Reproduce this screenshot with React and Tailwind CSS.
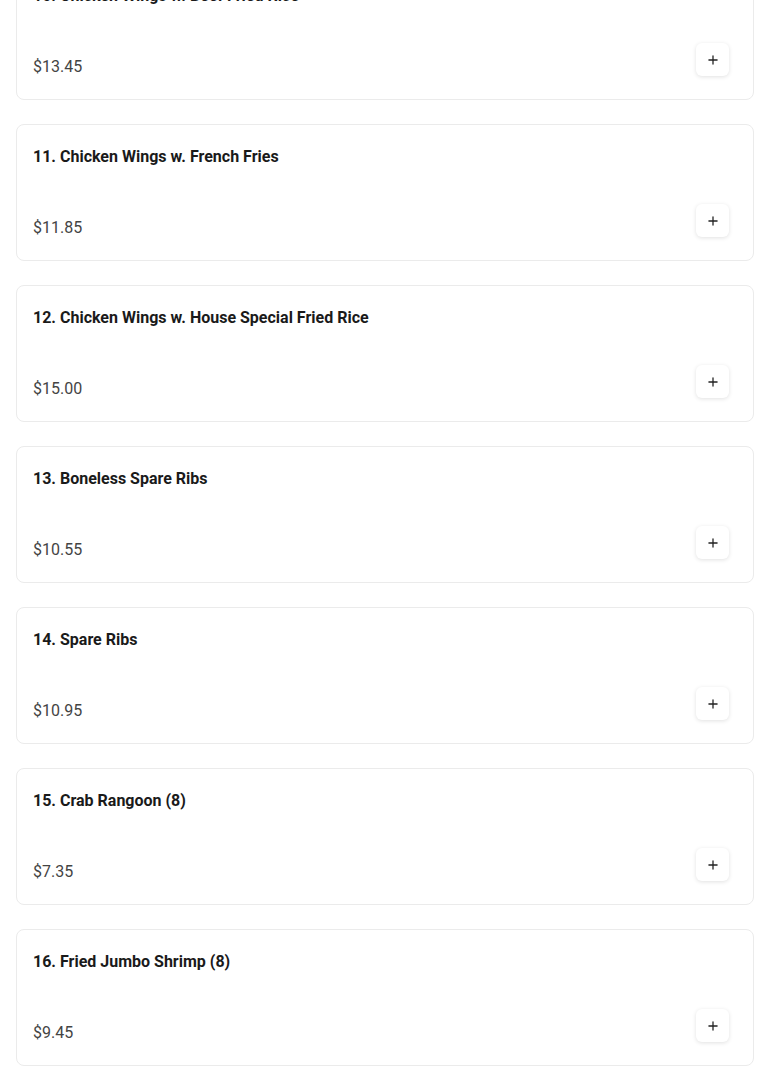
import React from "react";
import { Plus } from "lucide-react";

const items = [
  ["10. Chicken Wings w. Beef Fried Rice", "$13.45"],
  ["11. Chicken Wings w. French Fries", "$11.85"],
  ["12. Chicken Wings w. House Special Fried Rice", "$15.00"],
  ["13. Boneless Spare Ribs", "$10.55"],
  ["14. Spare Ribs", "$10.95"],
  ["15. Crab Rangoon (8)", "$7.35"],
  ["16. Fried Jumbo Shrimp (8)", "$9.45"],
];

export default function App() {
  return (
    <div className="h-[1084px] overflow-hidden bg-white" style={{ fontFamily: "Roboto, 'Liberation Sans', sans-serif" }}>
      <div className="-mt-[37px] flex flex-col gap-6 px-4">
        {items.map(([name, price]) => (
          <div key={name} className="h-[137px] rounded-lg border border-[#ebebeb] bg-white pl-4 pr-6 py-5 flex flex-col">
            <div className="text-base leading-6 font-bold text-[#1a1a1a]">{name}</div>
            <div className="mt-auto flex items-end justify-between">
              <div className="text-base leading-6 text-[#444]">{price}</div>
              <button className="mb-[3px] flex h-[33px] w-[33px] items-center justify-center rounded-md bg-white shadow-[0_1px_4px_rgba(0,0,0,0.12)]">
                <Plus size={14} strokeWidth={2.2} className="text-[#222]" />
              </button>
            </div>
          </div>
        ))}
      </div>
    </div>
  );
}
